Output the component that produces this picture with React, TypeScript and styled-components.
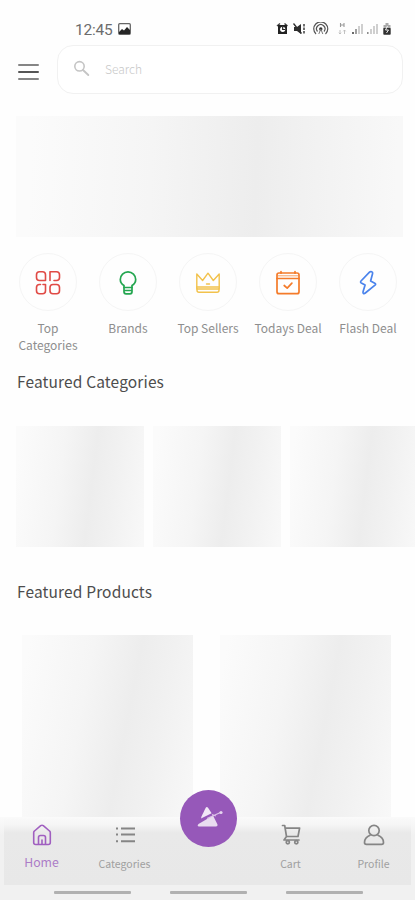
import React from "react";
import styled, { createGlobalStyle } from "styled-components";

const Global = createGlobalStyle`
  * { box-sizing: border-box; }
  body { margin: 0; background: #fff; overflow: hidden; }
`;

const Screen = styled.div`
  position: relative;
  width: 415px;
  height: 900px;
  overflow: hidden;
  display: flex;
  flex-direction: column;
  background: #fefefe;
  font-family: "Noto Sans CJK SC", "Noto Sans", sans-serif;
`;

const StatusBar = styled.header`
  display: flex;
  align-items: center;
  justify-content: space-between;
  height: 45px;
  padding: 14px 22px 0 75px;
  flex-shrink: 0;
`;

const Clock = styled.div`
  display: flex;
  align-items: center;
  gap: 5px;
  font: 400 15.5px/18px Roboto, sans-serif;
  letter-spacing: -0.2px;
  color: #6c6c6c;
  svg { margin-top: -1px; }
`;

const StatusIcons = styled.div`
  display: flex;
  align-items: center;
  margin-top: -1px;
  svg { display: block; }
`;

const TopBar = styled.div`
  display: flex;
  align-items: center;
  height: 48px;
  padding: 0 12px 0 18px;
  gap: 17px;
  flex-shrink: 0;
`;

const MenuButton = styled.button`
  width: 22px;
  height: 16px;
  margin-top: 5px;
  padding: 0;
  border: 0;
  background: none;
  display: flex;
  flex-direction: column;
  justify-content: space-between;
`;

const MenuLine = styled.span<{ $dark?: boolean }>`
  height: 2px;
  width: 21px;
  border-radius: 1px;
  background: ${(p) => (p.$dark ? "#555" : "#858585")};
`;

const SearchBox = styled.div`
  flex: 1;
  height: 49px;
  display: flex;
  align-items: center;
  gap: 15px;
  padding: 0 15px;
  border: 1.5px solid #f1f1f1;
  border-radius: 16px;
  background: #fff;
  color: #c8c8c8;
  font-size: 12px;
  font-weight: 300;
  svg { margin-top: -2px; }
  span { margin-top: -1px; }
`;

const Shimmer = styled.div<{ $w: number; $h: number; $angle?: number; $peak?: number }>`
  width: ${(p) => p.$w}px;
  height: ${(p) => p.$h}px;
  flex-shrink: 0;
  background: linear-gradient(
    ${(p) => p.$angle ?? 97}deg,
    #fbfbfb 4%,
    #f5f5f5 35%,
    #ededed ${(p) => p.$peak ?? 58}%,
    #f1f1f1 74%,
    #f8f8f8 98%
  );
`;

const Banner = styled.section`
  padding: 23px 0 0 16px;
  flex-shrink: 0;
`;

const Shortcuts = styled.nav`
  display: grid;
  grid-template-columns: repeat(5, 80px);
  height: 117px;
  padding: 16px 0 0 8px;
  flex-shrink: 0;
`;

const Shortcut = styled.div`
  display: flex;
  flex-direction: column;
  align-items: center;
  text-align: center;
  color: #8e8e8e;
  font-size: 12px;
  line-height: 17px;
`;

const Circle = styled.div<{ $color: string }>`
  width: 58px;
  height: 58px;
  margin-bottom: 8px;
  padding-top: 1px;
  border: 1.5px solid #f5f5f5;
  border-radius: 50%;
  display: flex;
  align-items: center;
  justify-content: center;
  color: ${(p) => p.$color};
`;

const Title = styled.h2<{ $height?: number }>`
  margin: 0;
  padding: 16px 0 0 17px;
  height: ${(p) => p.$height ?? 72}px;
  font-size: 15.5px;
  line-height: 22px;
  font-weight: 400;
  letter-spacing: 0.14px;
  color: #4d4d4d;
  flex-shrink: 0;
`;

const CategoryRow = styled.section`
  display: flex;
  gap: 9px;
  height: 138px;
  padding-left: 16px;
  flex-shrink: 0;
`;

const ProductRow = styled.section`
  display: flex;
  gap: 27px;
  padding-left: 22px;
  flex-shrink: 0;
`;

const BottomBar = styled.footer`
  position: absolute;
  inset: auto 0 0 0;
  height: 83px;
  padding: 0 4px;
  background: linear-gradient(#fafafa 0, #f6f6f6 8px, #f1f1f1 18px, #f1f1f1 100%);
`;

const Tabs = styled.nav`
  display: grid;
  grid-template-columns: 75px 91px 76px 89px 77px;
  height: 68px;
  background: linear-gradient(#fafafa 0, #f5f5f5 8px, #e9e9e9 16px, #e8e8e8 100%);
`;

const Tab = styled.div<{ $active?: boolean }>`
  display: flex;
  flex-direction: column;
  align-items: center;
  padding-top: 7px;
  color: ${(p) => (p.$active ? "#a05fc0" : "#858585")};
  svg { display: block; }
`;

const TabLabel = styled.span<{ $active?: boolean }>`
  margin-top: ${(p) => (p.$active ? 8 : 10)}px;
  font-size: ${(p) => (p.$active ? 12.3 : 10.5)}px;
  line-height: 16px;
  color: ${(p) => (p.$active ? "#ac7cc7" : "#a0a0a0")};
`;

const Handles = styled.div`
  display: flex;
  justify-content: center;
  gap: 39px;
  padding: 6px 0 0 1px;
`;

const Handle = styled.span`
  width: 77px;
  height: 3px;
  border-radius: 1px;
  background: #b1b1b1;
`;

const ActionButton = styled.button`
  position: absolute;
  left: 179.5px;
  top: 789.5px;
  width: 57px;
  height: 57px;
  border: 0;
  border-radius: 50%;
  padding: 0;
  background: #9658b9;
  display: flex;
  align-items: center;
  justify-content: center;
`;

const stroke = {
  fill: "none",
  stroke: "currentColor",
  strokeLinejoin: "round" as const,
  strokeLinecap: "round" as const,
};

const PictureIcon = () => (
  <svg width="13" height="12" viewBox="0 0 13 12">
    <rect x="0.7" y="0.7" width="11.6" height="10.6" rx="1" fill="#fff" stroke="#666" strokeWidth="1.3" />
    <path d="M1 11V9l3-3 2 1.5L9 4l3 3v4Z" fill="#252525" />
  </svg>
);

const StatusGlyphs = () => (
  <svg width="117" height="14" viewBox="276 22 117 14">
    <path d="M277 26l3-2.5M287.5 26l-3-2.5" stroke="#444" strokeWidth="1.5" />
    <path d="M278 25h9v9h-9Z" fill="#222" />
    <circle cx="282.7" cy="29.3" r="2.6" fill="#fff" />
    <path d="M282.7 26.5v3h2.8" stroke="#222" strokeWidth="1.2" fill="none" />
    <path d="M294 27h3l4-3v10l-4-3h-3Z" fill="#2c2c2c" />
    <path d="M293.5 23.5l8 10" stroke="#2c2c2c" strokeWidth="1.3" />
    <path d="M304 24v10" stroke="#555" strokeWidth="1.7" strokeDasharray="2.5 1" />
    <g fill="none" stroke="#555" strokeWidth="1.2">
      <path d="M316 34a7 7 0 1 1 9.5 0" />
      <path d="M317.5 31.5a4.2 4.2 0 1 1 6.5 0" />
    </g>
    <circle cx="320.8" cy="29" r="1.7" fill="#333" />
    <path d="M320.8 29l-2 5M320.8 29l2 5" stroke="#777" />
    <path d="M340.5 23v4M344 23v4M340.5 25h3.5" stroke="#999" strokeWidth="1.1" />
    <path d="M340 30v4m-1.2-1.3 1.2 1.3 1.2-1.3M344.5 34v-4m-1.2 1.3 1.2-1.3 1.2 1.3" stroke="#bbb" strokeWidth="0.9" fill="none" />
    <path d="M353 34v-2" stroke="#444" strokeWidth="1.6" />
    <path d="M356 34v-5" stroke="#777" strokeWidth="1.4" />
    <path d="M359 34v-8M362 34V24M371 34v-5M374 34v-8M377 34V24" stroke="#c4c4c4" strokeWidth="1.6" />
    <path d="M367.8 34v-2" stroke="#888" strokeWidth="1.5" />
    <path d="M385.5 23h3v2h2v4h-7v-4h2Z" fill="#aaa" />
    <rect x="383.3" y="28" width="7.4" height="6.7" rx="0.8" fill="#303030" />
    <path d="M387.5 26l-2 4h3l-2 3" stroke="#fff" strokeWidth="0.9" fill="none" />
  </svg>
);

const SearchIcon = () => (
  <svg width="17" height="17" viewBox="0 0 17 17" {...stroke} stroke="#c5c5c5" strokeWidth="1.6">
    <circle cx="6.5" cy="6.3" r="4.7" />
    <path d="M10 10l5.3 5" strokeWidth="1.9" />
  </svg>
);

const GridIcon = () => (
  <svg width="26" height="26" viewBox="0 0 26 26" {...stroke} strokeWidth="1.6">
    <path d="M4.5 1.8h3a3 3 0 0 1 3 3v5.700h-6a3 3 0 0 1-3-3V4.800a3 3 0 0 1 3-3Z" />
    <path d="M15 10.500V1.800h6.500a3 3 0 0 1 3 3v2.700a3 3 0 0 1-3 3h-2.500" />
    <path d="M5.500 14.500h-1a3 3 0 0 0-3 3v3.200a3 3 0 0 0 3 3h3a3 3 0 0 0 3-3v-6.200H8" />
    <rect x="15" y="14.500" width="9.500" height="9.200" rx="3" />
  </svg>
);

const BulbIcon = () => (
  <svg width="20" height="26" viewBox="0 0 20 26" {...stroke} strokeWidth="1.7">
    <path d="M6 17.500v-2C3.500 14 2.300 12 2.300 9.500a7.700 7.700 0 0 1 15.400 0c0 2.500-1.200 4.500-3.700 6v2Z" />
    <path d="M6 17.500v4.300a2 2 0 0 0 2 2h4a2 2 0 0 0 2-2v-4.300M6 20.500h8" />
  </svg>
);

const CrownIcon = () => (
  <svg width="26" height="26" viewBox="0 0 26 26" {...stroke} strokeWidth="1.400">
    <path d="M1.800 19V4l5.800 6.500L13 3.200l5.300 7.300L24.200 4v15Z" />
    <path d="M1.800 17h22.400M2 19v1.300a2 2 0 0 0 2 2h18a2 2 0 0 0 2-2V19M11.500 14h3" />
  </svg>
);

const CalendarIcon = () => (
  <svg width="26" height="26" viewBox="0 0 26 26" {...stroke} strokeWidth="1.700">
    <rect x="2" y="3" width="22" height="20.700" rx="2" />
    <path d="M2 8.500h22M6 1.700v1.500M20 1.700v1.500M9.200 15.500l3 2.700 4.700-5" />
    <path d="M3 5.800h20" strokeWidth="0.700" />
  </svg>
);

const BoltIcon = () => (
  <svg width="20" height="26" viewBox="0 0 20 26" {...stroke} strokeWidth="1.700">
    <path d="M11.500 2.200 3 11q-1 1.200.3 2l3.800 2-2 6.500c-.6 2 .8 2.700 2.200 1.500L17 15.200q1.300-1.200-.2-2L12.600 11l2-7.500c.4-1.600-1.800-2.500-3.100-1.300Z" />
  </svg>
);

const HomeIcon = () => (
  <svg width="20" height="22" viewBox="0 0 20 22" {...stroke} strokeWidth="1.600">
    <path d="M1.700 8.500Q1.700 7.500 2.500 7L8.700 1.700Q10 .8 11.300 1.700L17.500 7Q18.300 7.500 18.300 8.500V18.500a2 2 0 0 1-2 2H3.700a2 2 0 0 1-2-2Z" />
    <path d="M6.500 20v-6.500a2 2 0 0 1 2-2h3a2 2 0 0 1 2 2V20M10 16v4" />
  </svg>
);

const ListIcon = () => (
  <svg width="22" height="22" viewBox="0 0 22 22" fill="none" stroke="currentColor" strokeWidth="2">
    <path d="M7 4.500h14M7 10.500h14M7 17.200h14" />
    <path d="M2 4.500h2M2 10.500h2M2 17.200h2" />
  </svg>
);

const CartIcon = () => (
  <svg width="20" height="22" viewBox="0 0 20 22" {...stroke} strokeWidth="1.700">
    <path d="M1.500 1.500h2.200L5.500 12.500H17L18.600 4.200H4.200M5.500 12.500 3 16h15" />
    <circle cx="6.800" cy="18.300" r="1.600" />
    <circle cx="15.300" cy="18.300" r="1.600" />
  </svg>
);

const PersonIcon = () => (
  <svg width="22" height="22" viewBox="0 0 22 22" {...stroke} strokeWidth="1.700">
    <circle cx="11" cy="6.500" r="5.200" />
    <path d="M7 11.300c-3.300 1.400-5.500 4-5.500 7.200 0 1.300.6 1.900 1.900 1.900h15.200c1.300 0 1.900-.6 1.900-1.900 0-3.200-2.200-5.800-5.500-7.200" />
  </svg>
);

const BrandMark = () => (
  <svg width="30" height="24" viewBox="193 806 30 24">
    <path d="M201.500 816.500 205.600 808q1.200-1.800 2.600 0l3.400 5.200-10.600 5.300Z" fill="#f1e7f6" />
    <path d="m198.500 824 14.500-8.500 4.500 9q.4 2-1.500 2h-17q-2.400-.4-.5-2.500Z" fill="#e9dcf0" />
    <path d="m207 818.500 13.500-6M212 814.500l4 1.500" stroke="#dcc1e8" strokeWidth="1.300" />
    <circle cx="221" cy="812.500" r="1.600" fill="#e5d4ee" />
  </svg>
);

const shortcuts = [
  { label: "Top Categories", color: "#e04a45", Icon: GridIcon },
  { label: "Brands", color: "#24a650", Icon: BulbIcon },
  { label: "Top Sellers", color: "#f2c24c", Icon: CrownIcon },
  { label: "Todays Deal", color: "#f47b2a", Icon: CalendarIcon },
  { label: "Flash Deal", color: "#4a83ec", Icon: BoltIcon },
];

export default function App() {
  return (
    <>
      <Global />
      <Screen>
        <StatusBar>
          <Clock>12:45 <PictureIcon /></Clock>
          <StatusIcons><StatusGlyphs /></StatusIcons>
        </StatusBar>
        <TopBar>
          <MenuButton aria-label="Menu">
            <MenuLine /><MenuLine $dark /><MenuLine />
          </MenuButton>
          <SearchBox><SearchIcon /><span>Search</span></SearchBox>
        </TopBar>
        <Banner><Shimmer $w={387} $h={121} $angle={92} $peak={62} /></Banner>
        <Shortcuts>
          {shortcuts.map(({ label, color, Icon }) => (
            <Shortcut key={label}>
              <Circle $color={color}><Icon /></Circle>
              {label}
            </Shortcut>
          ))}
        </Shortcuts>
        <Title>Featured Categories</Title>
        <CategoryRow>
          <Shimmer $w={128} $h={121} />
          <Shimmer $w={128} $h={121} />
          <Shimmer $w={128} $h={121} />
        </CategoryRow>
        <Title $height={71}>Featured Products</Title>
        <ProductRow>
          <Shimmer $w={171} $h={200} $angle={101} />
          <Shimmer $w={171} $h={200} $angle={101} />
        </ProductRow>
        <BottomBar>
          <Tabs>
            <Tab $active><HomeIcon /><TabLabel $active>Home</TabLabel></Tab>
            <Tab><ListIcon /><TabLabel>Categories</TabLabel></Tab>
            <span />
            <Tab><CartIcon /><TabLabel>Cart</TabLabel></Tab>
            <Tab><PersonIcon /><TabLabel>Profile</TabLabel></Tab>
          </Tabs>
          <Handles><Handle /><Handle /><Handle /></Handles>
        </BottomBar>
        <ActionButton aria-label="Open store"><BrandMark /></ActionButton>
      </Screen>
    </>
  );
}
